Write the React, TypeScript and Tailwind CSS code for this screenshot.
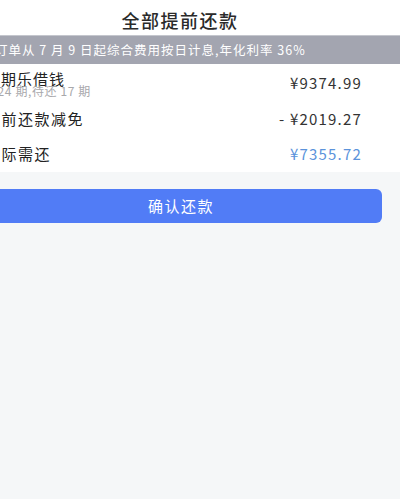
export default function App() {
  const font = { fontFamily: '"Noto Sans CJK SC", "Noto Sans", sans-serif' };
  return (
    <div className="w-[400px] h-[499px] overflow-hidden bg-[#f5f7f8]" style={font}>
      <div className="ml-[-40px] w-[440px]">
        {/* Title */}
        <div className="h-[35px] bg-white flex items-center justify-center">
          <h1 className="text-[18px] leading-none font-medium tracking-[1.5px] text-[#2a2a2a] mt-[4px]">全部提前还款</h1>
        </div>

        {/* Notice banner */}
        <div className="h-[29px] bg-[#a3a5b0] border-t border-[#c4c6cd] flex items-center pl-[35px]">
          <p className="text-[12.5px] leading-none tracking-[1px] text-white">订单从 7 月 9 日起综合费用按日计息,年化利率 36%</p>
        </div>

        {/* Rows */}
        <div className="bg-white pl-[25px] pr-[38px]">
          <div className="h-[37px] flex items-center justify-between">
            <div className="flex flex-col pt-[2px]">
              <span className="text-[15px] leading-[13px] tracking-[1px] text-[#222]">分期乐借钱</span>
              <span className="text-[12px] leading-[10px] tracking-[0.6px] text-[#a8a8ab] mt-[1px]">共24 期,待还 17 期</span>
            </div>
            <span className="text-[15px] tracking-[1.2px] text-[#333] mt-[2px]">¥9374.99</span>
          </div>
          <div className="h-[36px] flex items-center justify-between">
            <span className="text-[15px] tracking-[1.5px] text-[#222]">提前还款减免</span>
            <span className="text-[15px] tracking-[1.2px] text-[#333]">- ¥2019.27</span>
          </div>
          <div className="h-[35px] flex items-center justify-between">
            <span className="text-[15px] tracking-[1.5px] text-[#222]">实际需还</span>
            <span className="text-[15px] tracking-[1.2px] text-[#5b93db]">¥7355.72</span>
          </div>
        </div>

        {/* Confirm button */}
        <div className="pt-[17px] pl-[20px] pr-[18px]">
          <button className="w-full h-[34px] rounded-[6px] bg-[#517cf6] text-white text-[15px] tracking-[1.5px] flex items-center justify-center">
            确认还款
          </button>
        </div>
      </div>
    </div>
  );
}
